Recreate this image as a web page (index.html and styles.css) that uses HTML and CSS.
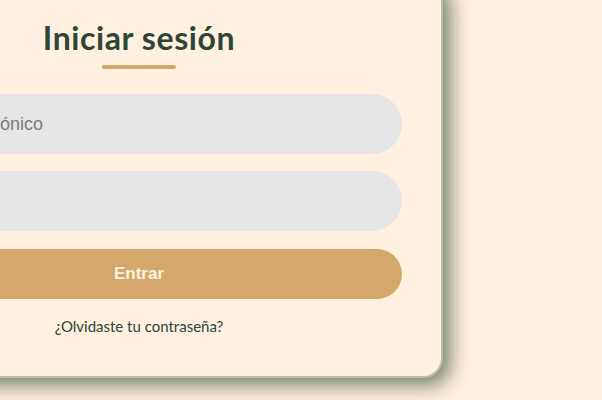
FILE: index.html
```html
<!DOCTYPE html>
<html lang="es">
<head>
<meta charset="utf-8">
<title>Iniciar sesión</title>
<link rel="stylesheet" href="styles.css">
</head>
<body>
<main class="stage">
  <section class="card">
    <h1 class="title">Iniciar sesión</h1>
    <div class="rule"></div>
    <form class="form">
      <input class="field" type="email" placeholder="Correo electrónico">
      <input class="field" type="password" placeholder="">
      <button class="btn" type="button">Entrar</button>
    </form>
    <a class="forgot" href="#">¿Olvidaste tu contraseña?</a>
  </section>
</main>
</body>
</html>
```

FILE: styles.css
```css
html, body {
  margin: 0;
  padding: 0;
  background: #fff0e0;
  overflow: hidden;
}
.stage {
  width: 602px;
  height: 400px;
  box-sizing: border-box;
  display: flex;
  flex-direction: column;
  justify-content: flex-end;
  align-items: flex-end;
  padding: 0 159px 22px 0;
}
.card {
  flex: none;
  width: 608px;
  box-sizing: border-box;
  background: #fff0e0;
  border: 2px solid #b5c39f;
  border-radius: 20px;
  box-shadow: 7px 7px 20px rgba(70, 88, 60, 0.75);
  padding: 40px 39px 41px;
  display: flex;
  flex-direction: column;
  align-items: center;
}
.title {
  margin: 0;
  font-family: "Lato", "Open Sans", sans-serif;
  font-weight: 700;
  font-size: 32px;
  line-height: 36px;
  color: #2f4538;
  letter-spacing: 0.6px;
}
.rule {
  width: 74px;
  height: 4px;
  border-radius: 2px;
  background: #d4a76a;
  margin: 9px 0 25px;
}
.form {
  width: 100%;
  display: flex;
  flex-direction: column;
  gap: 17px;
}
.field {
  height: 60px;
  box-sizing: border-box;
  border: none;
  border-radius: 30px;
  background: #e6e6e6;
  padding: 0 20px;
  font-family: "Liberation Sans", Arial, sans-serif;
  font-size: 18px;
  color: #333;
  outline: none;
}
.field::placeholder {
  color: #7b7b7b;
}
.btn {
  margin-top: 1px;
  height: 50px;
  border: none;
  border-radius: 25px;
  background: #d4a76a;
  color: #fff0e0;
  font-family: "Liberation Sans", Arial, sans-serif;
  font-weight: 700;
  font-size: 17px;
}
.forgot {
  margin-top: 18px;
  font-family: "Lato", "Open Sans", sans-serif;
  font-size: 15px;
  line-height: 18px;
  color: #2f4538;
  text-decoration: none;
}
```
